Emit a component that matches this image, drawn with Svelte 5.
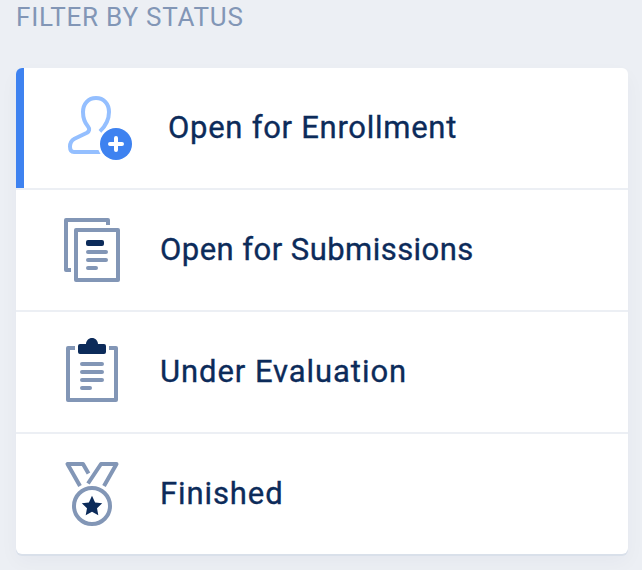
<script>
  const filters = [
    { label: 'Open for Enrollment', icon: 'enroll', active: true, spacing: 0.73 },
    { label: 'Open for Submissions', icon: 'submit', spacing: 0.46 },
    { label: 'Under Evaluation', icon: 'evaluate', spacing: 0.93 },
    { label: 'Finished', icon: 'finished', spacing: 0.9 }
  ];
</script>

<main>
  <h2>FILTER BY STATUS</h2>
  <ul>
    {#each filters as f}
      <li class:active={f.active}>
        <svg viewBox="0 0 80 84" width="80" height="84" fill="none" stroke="#8296b6" stroke-width="4" stroke-linejoin="round">
          {#if f.icon === 'enroll'}
            <path stroke="#94bfff" d="M44 45.5C50 39.5 53 33 53 26C53 17.5 47.5 12 40 12S27 17.5 27 26C27 32 29 37 32 40.5C34 43 33.3 45.3 31 46.7L18.5 52.7C15.5 54.4 14 57 14 60.5C14 64 15.5 66 18 66H46" />
            <circle cx="60" cy="58" r="18.5" fill="#fff" stroke="none" />
            <circle cx="60" cy="58" r="16" fill="#3e82f0" stroke="none" />
            <path stroke="#fff" stroke-linecap="round" d="M54 58H66M60 52V64" />
          {:else if f.icon === 'submit'}
            <path d="M52 17V12H10V62H15" />
            <rect x="20" y="22" width="42" height="50" />
            <rect x="30" y="32" width="18" height="6" rx="2" fill="#0c2b5a" stroke="none" />
            <path stroke-linecap="round" d="M32 44H50M32 52H50M32 60H40" />
          {:else if f.icon === 'evaluate'}
            <path d="M19 18H12V70H60V18H53" />
            <path fill="#0c2b5a" stroke="none" d="M24 14H30C30 10.7 32.7 8 36 8S42 10.7 42 14H48Q50 14 50 16V22Q50 24 48 24H24Q22 24 22 22V16Q22 14 24 14Z" />
            <path stroke-linecap="round" d="M26 34H46M26 42H46M26 50H46M26 58H34" />
          {:else}
            <path d="M24 34L11.5 12H27L32.5 21.5M32 31.5L45 12H60.5L48 34" />
            <circle cx="36" cy="54" r="18" />
            <path fill="#0c2b5a" stroke="none" d="M36 43.8L39.1 50.4L46.2 51.3L41 56.2L42.3 63.3L36 59.8L29.7 63.3L31 56.2L25.8 51.3L32.9 50.4Z" />
          {/if}
        </svg>
        <span style:letter-spacing="{f.spacing}px">{f.label}</span>
      </li>
    {/each}
  </ul>
</main>

<style>
  :global(body) {
    background: #eceff4;
  }
  main {
    box-sizing: border-box;
    height: 570px;
    padding: 0 14px 0 16px;
    overflow: hidden;
    font-family: Roboto, 'Liberation Sans', sans-serif;
  }
  h2 {
    margin: 0;
    height: 68px;
    font-size: 26px;
    line-height: 34px;
    font-weight: 400;
    letter-spacing: 0.77px;
    color: #8296b6;
    white-space: nowrap;
  }
  ul {
    margin: 0;
    padding: 0;
    list-style: none;
    background: #fff;
    border-radius: 6px;
    overflow: hidden;
    box-shadow: 0 2px 0 #d9e0ea, 0 8px 20px rgba(15, 42, 89, 0.035);
  }
  li {
    box-sizing: border-box;
    display: flex;
    align-items: center;
    height: 122px;
    padding-left: 40px;
    border-bottom: 2px solid #eceff4;
  }
  li:last-child {
    height: 120px;
    border-bottom: 0;
  }
  .active {
    background: linear-gradient(#3e82f0, #3e82f0) left / 8px 100% no-repeat;
    background-clip: padding-box;
  }
  .active span {
    margin-left: 32px;
  }
  svg {
    flex: none;
  }
  span {
    margin-left: 24px;
    font-size: 31px;
    line-height: 40px;
    font-weight: 400;
    -webkit-text-stroke: 0.35px #0c2b5a;
    color: #0c2b5a;
    white-space: nowrap;
  }
</style>
